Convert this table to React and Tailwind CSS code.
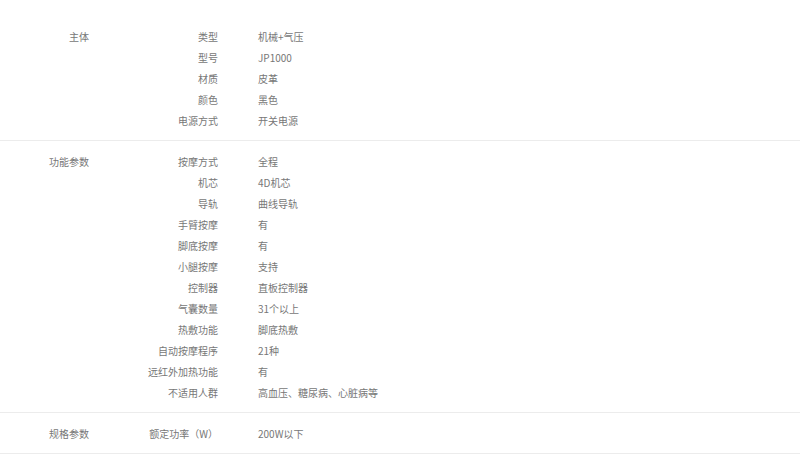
import React from "react";

const sections = [
  {
    title: "主体",
    rows: [
      ["类型", "机械+气压"],
      ["型号", "JP1000"],
      ["材质", "皮革"],
      ["颜色", "黑色"],
      ["电源方式", "开关电源"],
    ],
  },
  {
    title: "功能参数",
    rows: [
      ["按摩方式", "全程"],
      ["机芯", "4D机芯"],
      ["导轨", "曲线导轨"],
      ["手臂按摩", "有"],
      ["脚底按摩", "有"],
      ["小腿按摩", "支持"],
      ["控制器", "直板控制器"],
      ["气囊数量", "31个以上"],
      ["热敷功能", "脚底热敷"],
      ["自动按摩程序", "21种"],
      ["远红外加热功能", "有"],
      ["不适用人群", "高血压、糖尿病、心脏病等"],
    ],
  },
  {
    title: "规格参数",
    rows: [["额定功率（W）", "200W以下"]],
  },
];

export default function App() {
  return (
    <div
      className="w-[800px] h-[454px] overflow-hidden bg-white pt-[16px] text-[10px] text-[#777777]"
      style={{ fontFamily: '"Noto Sans CJK SC", "Microsoft YaHei", sans-serif' }}
    >
      {sections.map((s) => (
        <div key={s.title} className="flex pt-[10px] pb-[9px] border-b border-[#ececec]">
          <div className="w-[89px] shrink-0 text-right leading-[21px]">{s.title}</div>
          <div className="flex flex-col">
            {s.rows.map(([k, v]) => (
              <div key={k} className="flex h-[21px] items-center leading-[21px]">
                <div className="w-[129px] text-right">{k}</div>
                <div className="ml-[40px]">{v}</div>
              </div>
            ))}
          </div>
        </div>
      ))}
    </div>
  );
}
